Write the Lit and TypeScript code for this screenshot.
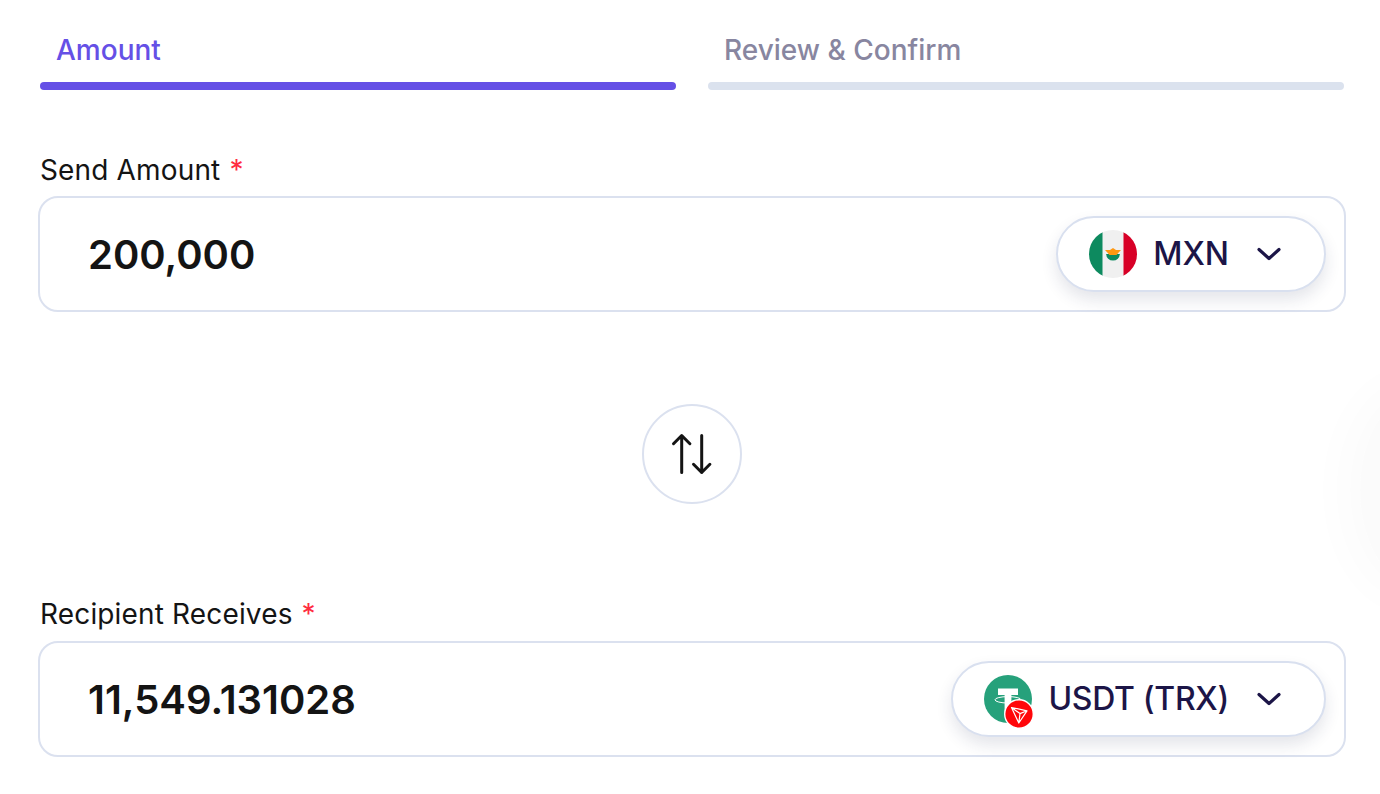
import { LitElement, html, css } from "lit";
import { customElement } from "lit/decorators.js";

const chevron = html`<svg class="chev" width="28" height="28" viewBox="0 0 28 28" fill="none"><path d="M4 9.5 L14 18.5 L24 9.5" stroke="#1c1547" stroke-width="3.2" stroke-linecap="round" stroke-linejoin="round"/></svg>`;

const mx = html`<svg class="flag" width="48" height="48" viewBox="0 0 48 48">
  <defs><clipPath id="mxc"><circle cx="24" cy="24" r="24"/></clipPath></defs>
  <g clip-path="url(#mxc)">
    <rect width="48" height="48" fill="#f0f0f0"/>
    <rect width="13.5" height="48" fill="#0d8a5f"/>
    <rect x="34.5" width="13.5" height="48" fill="#d80027"/>
    <path d="M17.2 24 A6.8 6.6 0 0 0 30.8 24 Z" fill="#0d8a5f"/>
    <path d="M16 20 L21 20 L24 18 L27 20 L32 20 L29.2 23 L27.5 25 L20.5 25 L18.8 23 Z" fill="#ff9811"/>
  </g></svg>`;

const usdt = html`<span class="token">
  <svg width="48" height="48" viewBox="0 0 48 48">
    <circle cx="24" cy="24" r="24" fill="#26a17b"/>
    <path d="M14 13.5 H34 V20 H27.4 V38 H20.6 V20 H14 Z" fill="#fff"/>
    <ellipse cx="24" cy="24.8" rx="13" ry="3.2" fill="none" stroke="#fff" stroke-width="1"/>
  </svg>
  <svg class="tron" width="30" height="30" viewBox="0 0 30 30">
    <circle cx="15" cy="15" r="14.3" fill="#ff060a" stroke="#fff" stroke-width="1.4"/>
    <path d="M7.5 8.5 L23 11.8 L14.8 24 Z M7.5 8.5 L16 14.6 L23 11.8 M16 14.6 L14.8 24" fill="none" stroke="#fff" stroke-width="1.2" stroke-linejoin="round"/>
  </svg>
</span>`;

const swap = html`<svg width="44" height="44" viewBox="0 0 44 44" fill="none" stroke="#141414" stroke-width="3" stroke-linecap="round" stroke-linejoin="round">
  <path d="M11.7 40.5 V3.5 M3.5 11.7 L11.7 3.5 L19.9 11.7"/>
  <path d="M31.7 3.5 V40.5 M23.5 32.3 L31.7 40.5 L39.9 32.3"/>
</svg>`;

@customElement("app-root")
export class AppRoot extends LitElement {
  static styles = css`
    :host {
      display: block;
      position: relative;
      width: 1380px;
      height: 794px;
      overflow: hidden;
      background: #fff;
      font-family: Inter, "Liberation Sans", sans-serif;
      color: #141414;
    }
    .glow {
      position: absolute;
      right: -80px;
      top: 400px;
      width: 100px;
      height: 180px;
      border-radius: 50%;
      background: rgba(0, 0, 0, 0.016);
      box-shadow: 0 0 40px 24px rgba(0, 0, 0, 0.014);
    }
    .page {
      position: relative;
      display: flex;
      flex-direction: column;
      padding: 0 36px 0 40px;
    }
    .tabs {
      display: grid;
      grid-template-columns: 1fr 1fr;
      column-gap: 32px;
      padding-top: 32px;
    }
    .tab-label {
      font-size: 28px;
      line-height: 36px;
      font-weight: 500;
      padding-left: 16px;
      color: #8886a0;
      margin-bottom: 14px;
    }
    .tab.active .tab-label { color: #6550e6; }
    .bar { height: 8px; border-radius: 4px; background: #dbe2ee; }
    .tab.active .bar { background: #6550e6; }
    .section { display: flex; flex-direction: column; }
    .send { margin-top: 62px; }
    .recv { margin-top: 92px; }
    .label {
      font-size: 28px;
      line-height: 36px;
      font-weight: 400;
      letter-spacing: 0.15px;
      color: #141414;
      margin-bottom: 8px;
    }
    .recv .label { margin-bottom: 9px; }
    .req { color: #ff2d3f; margin-left: 1px; }
    .field {
      box-sizing: border-box;
      height: 116px;
      margin-left: -2px;
      width: 1308px;
      border: 2px solid #dbe1ef;
      border-radius: 20px;
      display: flex;
      align-items: center;
      justify-content: space-between;
      padding: 0 18px 0 48px;
    }
    .value { font-size: 40px; font-weight: 600; color: #141414; }
    .pill {
      box-sizing: border-box;
      height: 76px;
      margin-top: -1px;
      border: 2px solid #d9e0ef;
      border-radius: 38px;
      background: #fff;
      box-shadow: 0 8px 16px rgba(30, 40, 80, 0.12);
      display: flex;
      align-items: center;
      padding: 0 41px 0 31px;
      font-size: 32px;
      font-weight: 500;
      color: #1c1547;
    }
    .pill .name { margin-left: 16px; white-space: nowrap; }
    .pill .name.tight { letter-spacing: -0.3px; }
    .pill .chev { margin-left: 26px; }
    .flag { display: block; }
    .token { position: relative; display: block; width: 48px; height: 48px; }
    .token svg { display: block; }
    .token .tron { position: absolute; right: -2px; bottom: -6px; }
    .swap-row { display: flex; justify-content: center; margin-top: 92px; }
    .swap {
      box-sizing: border-box;
      width: 100px;
      height: 100px;
      border-radius: 50%;
      border: 2px solid #dbe1ef;
      background: #fff;
      display: flex;
      align-items: center;
      justify-content: center;
    }
  `;

  render() {
    return html`
      <div class="glow"></div>
      <div class="page">
        <div class="tabs">
          <div class="tab active"><div class="tab-label">Amount</div><div class="bar"></div></div>
          <div class="tab"><div class="tab-label">Review &amp; Confirm</div><div class="bar"></div></div>
        </div>
        <div class="section send">
          <div class="label">Send Amount <span class="req">*</span></div>
          <div class="field">
            <span class="value">200,000</span>
            <div class="pill">${mx}<span class="name">MXN</span>${chevron}</div>
          </div>
        </div>
        <div class="swap-row"><div class="swap">${swap}</div></div>
        <div class="section recv">
          <div class="label">Recipient Receives <span class="req">*</span></div>
          <div class="field">
            <span class="value">11,549.131028</span>
            <div class="pill">${usdt}<span class="name tight">USDT (TRX)</span>${chevron}</div>
          </div>
        </div>
      </div>
    `;
  }
}
